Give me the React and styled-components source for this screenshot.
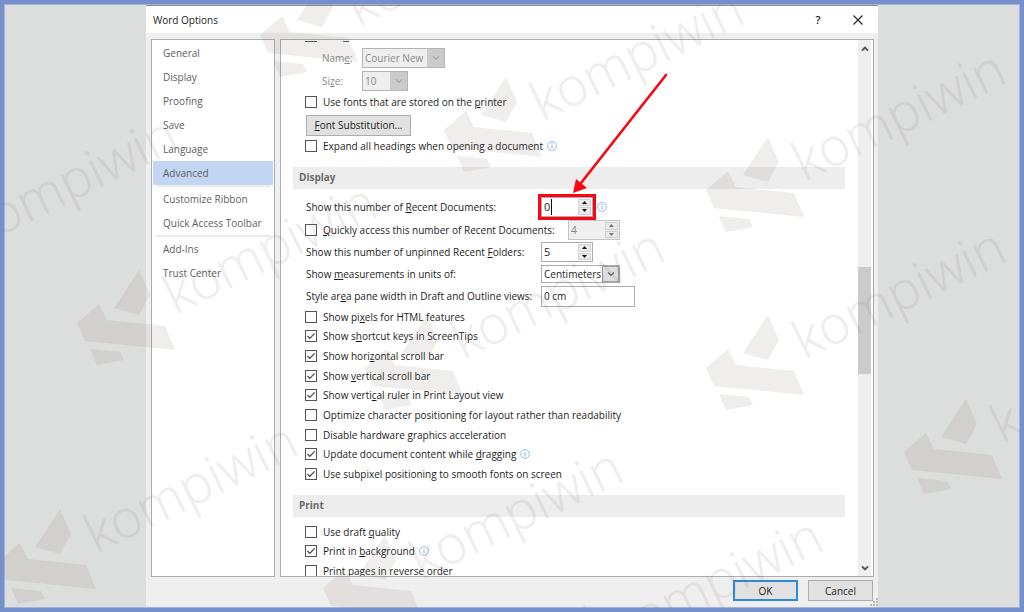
import React from "react";
import styled, { createGlobalStyle } from "styled-components";

const FONT = '"Open Sans", sans-serif';

const GlobalStyle = createGlobalStyle`
  *, *::before, *::after {
    box-sizing: border-box;
  }

  body {
    margin: 0;
    background: #dcdedd;
    color: #1c1c1c;
    font: 10px/16px ${FONT};
  }

  button, input, select {
    font: inherit;
    color: inherit;
  }

  u {
    text-underline-offset: 1px;
  }
`;

const Desktop = styled.div`
  position: relative;
  display: grid;
  grid-template-columns: 141fr 732fr 141fr;
  height: 100vh;
  padding: 1px;
  border: 4px solid #7590cb;
  box-shadow: inset 0 0 0 1px #a3b3d8;
  overflow: hidden;
`;

const Dialog = styled.section`
  grid-column: 2;
  display: flex;
  flex-direction: column;
  min-height: 0;
  background: #efefef;
  border-top: 1px solid #8d9097;
`;

const TitleBar = styled.header`
  display: flex;
  align-items: center;
  height: 27px;
  padding: 0 12px 0 7px;
  background: #fff;

  h1 {
    flex: 1;
    margin: 0;
    font-size: 10px;
    font-weight: 400;
  }
`;

const TitleButton = styled.button`
  display: grid;
  place-items: center;
  width: 16px;
  height: 20px;
  margin-left: 24px;
  padding: 0;
  border: 0;
  background: none;
  font-size: 11px;
  font-weight: 600;
`;

const Body = styled.div`
  flex: 1;
  display: flex;
  gap: 5px;
  min-height: 0;
  padding: 6px 4px 0 5px;
`;

const Nav = styled.nav`
  flex: 0 0 124px;
  padding: 1px;
  border: 1px solid #a9acb3;
  background: #fff;

  hr {
    margin: 0 3px;
    border: 0;
    border-top: 2px solid #ebebeb;
  }
`;

const NavItem = styled.a`
  display: block;
  height: 24px;
  padding-left: 10px;
  background: ${({ $active }) => ($active ? "#c2d5f2" : "transparent")};
  color: #5e5e5e;
  line-height: 24px;
  text-decoration: none;
  white-space: nowrap;
`;

const Panel = styled.main`
  flex: 1;
  display: flex;
  min-width: 0;
  padding-right: 2px;
  border: 1px solid #a9acb3;
  background: #fff;
`;

const Content = styled.div`
  flex: 1;
  min-width: 0;
  padding: 0 13px 0 12px;
  overflow: hidden;
`;

const ScrollBar = styled.div`
  display: flex;
  flex-direction: column;
  align-items: center;
  width: 13px;
  background: #efefef;
`;

const ScrollButton = styled.button`
  display: grid;
  place-items: center;
  width: 13px;
  height: 17px;
  padding: 0;
  border: 0;
  background: none;
`;

const ScrollTrack = styled.div`
  flex: 1;
  display: flex;
  flex-direction: column;
  width: 100%;
`;

const ScrollThumb = styled.div`
  flex: 0 0 107px;
  background: #cbcbcb;
`;

const ScrollSpace = styled.div`
  flex: ${({ $grow }) => $grow};
`;

const SectionTitle = styled.h2`
  height: 22px;
  margin: 11px 0 5px;
  padding-left: 6px;
  background: #ededed;
  color: #6b6b6b;
  font-size: 10px;
  font-weight: 700;
  line-height: 20px;
`;

const Fields = styled.div`
  display: flex;
  flex-direction: column;
  padding-left: 12px;
`;

const Row = styled.div`
  display: flex;
  align-items: center;
  gap: ${({ $gap }) => $gap || 0}px;
  height: ${({ $height }) => $height || 22}px;
  padding-left: ${({ $indent }) => $indent || 0}px;
  color: ${({ $disabled }) => ($disabled ? "#8a8a8a" : "inherit")};
  white-space: nowrap;
`;

const FieldLabel = styled.label`
  flex: 0 0 ${({ $width }) => $width}px;
  padding-left: 1px;
`;

const CutOffRow = styled.div`
  display: flex;
  align-items: flex-end;
  gap: 26px;
  height: 2px;
  padding-left: 12px;

  span {
    width: 12px;
    height: 1px;
    background: #555;
  }

  span + span {
    width: 6px;
  }
`;

const CheckList = styled.div`
  display: grid;
  grid-auto-rows: 1fr;
  height: ${({ $height }) => $height}px;
`;

const CheckLabel = styled.label`
  display: flex;
  align-items: center;
  gap: 6px;
  white-space: nowrap;

  > span {
    display: grid;
    width: 12px;
    height: 12px;
  }

  > span > * {
    grid-area: 1 / 1;
    width: 12px;
    height: 12px;
    margin: 0;
  }

  input {
    appearance: none;
    border: 1px solid #555;
    background: #fff;
  }
`;

const InfoIcon = styled.svg`
  flex: none;
  width: 10px;
  height: 10px;
  margin-left: ${({ $gap }) => $gap}px;
`;

const Spinner = styled.div`
  display: flex;
  width: 52px;
  height: 20px;
  padding: 1px;
  border: 1px solid ${({ $disabled }) => ($disabled ? "#c4c4c4" : "#a9acb3")};
  background: ${({ $disabled }) => ($disabled ? "#efefef" : "#fff")};

  input {
    flex: 1;
    min-width: 0;
    padding: 0 0 0 1px;
    border: 0;
    background: none;
    font-size: 11px;
    color: ${({ $disabled }) => ($disabled ? "#8a8a8a" : "#262626")};
  }
`;

const SpinButtons = styled.div`
  display: grid;
  gap: 1px;
  width: 13px;

  button {
    display: grid;
    place-items: center;
    min-height: 0;
    padding: 0;
    border: 1px solid #cfcfcf;
    background: #ebebeb;
  }
`;

const Highlight = styled.div`
  position: relative;
  display: flex;
  width: 52px;
  outline: 3px solid #fb0512;

  input {
    flex: none;
    width: 9px;
    border-right: 1px solid #111;
  }

  input + div {
    margin-left: auto;
  }
`;

const Arrow = styled.svg`
  position: absolute;
  right: -79px;
  bottom: 22px;
  width: 100px;
  height: 124px;
  pointer-events: none;
`;

const SelectBox = styled.div`
  display: grid;
  grid-template-columns: 1fr 17px;
  width: ${({ $width }) => $width}px;
  height: ${({ $disabled }) => ($disabled ? 20 : 18)}px;
  border: 1px solid ${({ $disabled }) => ($disabled ? "#b4b4b4" : "#a9acb3")};
  background: ${({ $disabled }) => ($disabled ? "#efefef" : "#fff")};

  select {
    grid-area: 1 / 1 / 2 / 3;
    min-width: 0;
    padding: 0 0 0 2px;
    appearance: none;
    border: 0;
    background: none;
    color: ${({ $disabled }) => ($disabled ? "#8a8a8a" : "#262626")};
    opacity: 1;
  }

  > span {
    grid-area: 1 / 2;
    display: grid;
    place-items: center;
    background: ${({ $disabled }) => ($disabled ? "#cbcbcb" : "#dedede")};
    border: ${({ $disabled }) => ($disabled ? "0" : "1px solid #a0a0a0")};
    pointer-events: none;
  }
`;

const TextBox = styled.input`
  width: 94px;
  height: 21px;
  padding: 0 2px;
  border: 1px solid #a9acb3;
  background: #fff;
`;

const PushButton = styled.button`
  width: ${({ $width }) => $width}px;
  height: 21px;
  padding: 0;
  border: ${({ $primary }) => ($primary ? "2px solid #2d8ad8" : "1px solid #adadad")};
  background: #e1e1e1;
  line-height: 16px;
`;

const Footer = styled.footer`
  position: relative;
  display: flex;
  align-items: center;
  justify-content: flex-end;
  gap: 10px;
  height: 30px;
  padding: 0 5px 3px 0;
`;

const SizeGrip = styled.svg`
  position: absolute;
  right: 0;
  bottom: 1px;
  width: 8px;
  height: 8px;
  fill: #b9b9b9;
`;

const Watermark = styled.svg`
  position: absolute;
  top: -4px;
  left: -4px;
  width: 1024px;
  height: 612px;
  pointer-events: none;
  fill: rgb(120, 96, 84);
  opacity: 0.1;

  text {
    font: 300 53px ${FONT};
    stroke: rgb(120, 96, 84);
    stroke-width: 0.4;
  }
`;

const marks = [
  [260, -18],
  [444, 77],
  [706, 137],
  [-122, 203],
  [77, 270],
  [365, 315],
  [706, 315],
  [904, 399],
  [-2, 509],
  [323, 535],
  [523, 604]
];

const displayOptions = [
  { label: <>Show pi<u>x</u>els for HTML features</> },
  { label: <>Show s<u>h</u>ortcut keys in ScreenTips</>, checked: true },
  { label: <>Show hori<u>z</u>ontal scroll bar</>, checked: true },
  { label: <>Show <u>v</u>ertical scroll bar</>, checked: true },
  { label: <>Show verti<u>c</u>al ruler in Print Layout view</>, checked: true },
  { label: <>Optimize character positioning for layout rather than readability</> },
  { label: <>Disable hardware <u>g</u>raphics acceleration</> },
  { label: <>Update document content while <u>d</u>ragging</>, checked: true, info: true },
  { label: <>Use subpixel positioning to smooth fonts on screen</>, checked: true }
];

const printOptions = [
  { label: <>Use draft <u>q</u>uality</> },
  { label: <>Print in <u>b</u>ackground</>, checked: true, info: true },
  { label: <>Print pages in <u>r</u>everse order</> }
];

const Info = ({ gap }) => (
  <InfoIcon $gap={gap} viewBox="0 0 10 10" fill="none" stroke="#8db4e2">
    <circle cx="5" cy="5" r="4.4" strokeWidth="0.9" />
    <path d="M5 4.3v3.2M5 2.3v1.1" strokeWidth="1.1" />
  </InfoIcon>
);

const Chevron = ({ up, color = "#555", weight = 1.2 }) => (
  <svg width="8" height="8" viewBox="0 0 8 8" fill="none" stroke={color} strokeWidth={weight}>
    <path d={up ? "M1 5.6 4 2.6 7 5.6" : "M1 2.4 4 5.4 7 2.4"} />
  </svg>
);

const Check = ({ label, checked, info }) => (
  <CheckLabel>
    <span>
      <input type="checkbox" defaultChecked={checked} />
      {checked && (
        <svg viewBox="0 0 12 12" fill="none" stroke="#444" strokeWidth="1.2">
          <path d="M2.5 6 4.8 8.4 9.6 3.4" />
        </svg>
      )}
    </span>
    <div>{label}</div>
    {info && <Info gap={-2} />}
  </CheckLabel>
);

const SpinBox = ({ id, label, value, disabled }) => (
  <Spinner $disabled={disabled}>
    <input id={id} aria-label={label} defaultValue={value} disabled={disabled} />
    <SpinButtons>
      {["M0 3 2.5 0 5 3z", "M0 0 2.5 3 5 0z"].map((d, index) => (
        <button key={d} disabled={disabled} aria-label={index ? "Decrease" : "Increase"}>
          <svg width="5" height="3" fill={disabled ? "#777" : "#111"}>
            <path d={d} />
          </svg>
        </button>
      ))}
    </SpinButtons>
  </Spinner>
);

const Select = ({ id, width, value, disabled }) => (
  <SelectBox $width={width} $disabled={disabled}>
    <select id={id} disabled={disabled}>
      <option>{value}</option>
    </select>
    <span>
      <Chevron color={disabled ? "#a2a2a2" : "#555"} />
    </span>
  </SelectBox>
);

const App = () => (
  <>
    <GlobalStyle />
    <Desktop>
      <Dialog>
        <TitleBar>
          <h1>Word Options</h1>
          <TitleButton aria-label="Help">?</TitleButton>
          <TitleButton aria-label="Close">
            <svg width="10" height="10" stroke="#222" strokeWidth="1.1">
              <path d="M.5.5l9 9M9.5.5l-9 9" />
            </svg>
          </TitleButton>
        </TitleBar>
        <Body>
          <Nav>
            {["General", "Display", "Proofing", "Save", "Language", "Advanced"].map(item => (
              <NavItem key={item} href="#" $active={item === "Advanced"}>{item}</NavItem>
            ))}
            <hr />
            <NavItem href="#">Customize Ribbon</NavItem>
            <NavItem href="#">Quick Access Toolbar</NavItem>
            <hr />
            <NavItem href="#">Add-Ins</NavItem>
            <NavItem href="#">Trust Center</NavItem>
          </Nav>
          <Panel>
            <Content>
              <CutOffRow><span /><span /></CutOffRow>
              <Fields>
                <Row $height={32} $indent={16} $disabled>
                  <FieldLabel htmlFor="font-name" $width={41}>Nam<u>e</u>:</FieldLabel>
                  <Select id="font-name" width={83} value="Courier New" disabled />
                </Row>
                <Row $height={14} $indent={16} $disabled>
                  <FieldLabel htmlFor="font-size" $width={41}>Si<u>z</u>e:</FieldLabel>
                  <Select id="font-size" width={46} value="10" disabled />
                </Row>
                <Row $height={27}>
                  <Check label={<>Use fonts that are stored on the <u>p</u>rinter</>} />
                </Row>
                <Row $height={20} $indent={1}>
                  <PushButton $width={105}><u>F</u>ont Substitution...</PushButton>
                </Row>
                <Row $height={21}>
                  <Check label={<>Expand all headings when opening a document</>} info />
                </Row>
              </Fields>
              <SectionTitle>Display</SectionTitle>
              <Fields>
                <Row $height={25}>
                  <FieldLabel htmlFor="recent-docs" $width={236}>
                    Show this number of <u>R</u>ecent Documents:
                  </FieldLabel>
                  <Highlight>
                    <SpinBox id="recent-docs" value="0" />
                    <Arrow viewBox="0 0 100 124" fill="#fb0512">
                      <path d="M94 4 9 112" stroke="#fb0512" strokeWidth="2.6" strokeLinecap="round" />
                      <path d="M1 122 4 108 15 117z" />
                    </Arrow>
                  </Highlight>
                  <Info gap={4} />
                </Row>
                <Row $gap={13}>
                  <Check label={<><u>Q</u>uickly access this number of Recent Documents:</>} />
                  <SpinBox label="Quick access count" value="4" disabled />
                </Row>
                <Row>
                  <FieldLabel htmlFor="recent-folders" $width={236}>
                    Show this number of unpinned Recent <u>F</u>olders:
                  </FieldLabel>
                  <SpinBox id="recent-folders" value="5" />
                </Row>
                <Row>
                  <FieldLabel htmlFor="units" $width={236}>
                    Show <u>m</u>easurements in units of:
                  </FieldLabel>
                  <Select id="units" width={79} value="Centimeters" />
                </Row>
                <Row>
                  <FieldLabel htmlFor="pane-width" $width={236}>
                    Style ar<u>e</u>a pane width in Draft and Outline views:
                  </FieldLabel>
                  <TextBox id="pane-width" defaultValue="0 cm" />
                </Row>
                <CheckList $height={177}>
                  {displayOptions.map((option, index) => <Check key={index} {...option} />)}
                </CheckList>
              </Fields>
              <SectionTitle>Print</SectionTitle>
              <Fields>
                <CheckList $height={59}>
                  {printOptions.map((option, index) => <Check key={index} {...option} />)}
                </CheckList>
              </Fields>
            </Content>
            <ScrollBar>
              <ScrollButton aria-label="Scroll up"><Chevron up weight={2} /></ScrollButton>
              <ScrollTrack>
                <ScrollSpace $grow={210} />
                <ScrollThumb />
                <ScrollSpace $grow={185} />
              </ScrollTrack>
              <ScrollButton aria-label="Scroll down"><Chevron weight={2} /></ScrollButton>
            </ScrollBar>
          </Panel>
        </Body>
        <Footer>
          <PushButton $width={65} $primary>OK</PushButton>
          <PushButton $width={65}>Cancel</PushButton>
          <SizeGrip viewBox="0 0 8 8">
            <path d="M0 6h2v2H0zM3 6h2v2H3zM6 6h2v2H6zM3 3h2v2H3zM6 3h2v2H6zM6 0h2v2H6z" />
          </SizeGrip>
        </Footer>
      </Dialog>
      <Watermark viewBox="0 0 1024 612">
        {marks.map(([x, y]) => (
          <g key={`${x} ${y}`} transform={`translate(${x} ${y})`}>
            <path d="M62 0 73 25 62 45 37 38zM22 34 30 50 88 56 98 80 8 71 0 53zM13 79 43 82 47 90 20 95z" />
            <text transform="translate(98 45) rotate(-26)">kompiwin</text>
          </g>
        ))}
      </Watermark>
    </Desktop>
  </>
);

export default App;
